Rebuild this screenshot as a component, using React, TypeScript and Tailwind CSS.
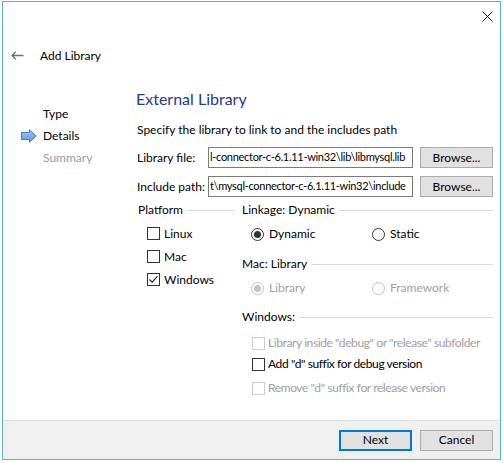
import { ReactNode } from "react";

const font = { fontFamily: 'Lato, "Noto Sans", sans-serif' };

function Check({ checked, disabled }: { checked?: boolean; disabled?: boolean }) {
  return (
    <div
      className={`w-[13px] h-[13px] border bg-white flex items-center justify-center shrink-0 ${
        disabled ? "border-[#cccccc]" : "border-[#333333]"
      }`}
    >
      {checked && (
        <svg width="11" height="11" viewBox="0 0 11 11">
          <path d="M1.5 5.5 L4.2 8.2 L9.5 2.2" fill="none" stroke="#222" strokeWidth="1.1" />
        </svg>
      )}
    </div>
  );
}

function Radio({ checked, disabled }: { checked?: boolean; disabled?: boolean }) {
  return (
    <div
      className={`w-[13px] h-[13px] rounded-full border bg-white flex items-center justify-center shrink-0 ${
        disabled ? "border-[#c4c4c4]" : "border-[#333333]"
      }`}
    >
      {checked && (
        <div className={`w-[7px] h-[7px] rounded-full ${disabled ? "bg-[#c4c4c4]" : "bg-[#333333]"}`} />
      )}
    </div>
  );
}

function GroupHeader({ children }: { children: ReactNode }) {
  return (
    <div className="h-[16px] flex items-center">
      <span className="whitespace-nowrap">{children}</span>
      <div className="flex-1 h-px bg-[#dcdcdc] ml-[4px]" />
    </div>
  );
}

function PathRow({ label, value }: { label: string; value: string }) {
  return (
    <div className="flex items-center h-[21px]">
      <span className="w-[71px] shrink-0 whitespace-nowrap">{label}</span>
      <div className="w-[205px] h-[21px] border border-[#7a7a7a] bg-white overflow-hidden whitespace-nowrap flex items-center pl-[1px] text-[11px] tracking-[-0.3px]">
        {value}
      </div>
      <button className="ml-[7px] w-[73px] h-[21px] border border-[#adadad] bg-[#e1e1e1] whitespace-nowrap">
        Browse...
      </button>
    </div>
  );
}

function NavArrow() {
  return (
    <svg width="16" height="14" viewBox="0 0 16 14" className="shrink-0">
      <defs>
        <linearGradient id="na" x1="0" y1="0" x2="0" y2="1">
          <stop offset="0" stopColor="#a9c8f2" />
          <stop offset="1" stopColor="#5d93e0" />
        </linearGradient>
      </defs>
      <path d="M0.5 3.5 H8.5 V0.8 L15.2 7 L8.5 13.2 V10.5 H0.5 Z" fill="url(#na)" stroke="#3f7ccf" strokeWidth="1" />
    </svg>
  );
}

export default function App() {
  return (
    <div className="w-[504px] h-[463px] bg-white text-[12px] text-black overflow-hidden" style={font}>
      <div className="ml-[2px] mt-[1px] w-[499px] h-[459px] border border-[#5ab4c0] flex flex-col">
        <div className="flex-1 flex flex-col bg-white">
          <div className="h-[33px] flex justify-end pr-[7px] pt-[9px]">
            <svg width="11" height="11" viewBox="0 0 11 11">
              <path d="M0.5 0.5 L10.5 10.5 M10.5 0.5 L0.5 10.5" stroke="#111" strokeWidth="1" />
            </svg>
          </div>
          <div className="h-[41px] flex items-center">
            <svg width="13" height="9" viewBox="0 0 13 9" className="ml-[8px]">
              <path d="M1 4.5 H12.5 M4.8 0.7 L1 4.5 L4.8 8.3" fill="none" stroke="#707070" strokeWidth="1.3" />
            </svg>
            <span className="ml-[16px] text-[12px]">Add Library</span>
          </div>

          <div className="flex">
            <div className="w-[133px] shrink-0 pt-[27px]">
              <div className="h-[22px] flex items-center pl-[40px]">Type</div>
              <div className="h-[22px] flex items-center pl-[18px]">
                <NavArrow />
                <span className="ml-[6px]">Details</span>
              </div>
              <div className="h-[22px] flex items-center pl-[40px] text-[#9a9a9a]">Summary</div>
            </div>

            <div className="flex-1 min-w-0 pr-[7px] whitespace-nowrap">
              <div className="mt-[12px] h-[22px] flex items-center text-[16px] text-[#1c3b91]">External Library</div>
              <div className="ml-[1px] mt-[10px] h-[20px] flex items-center">
                Specify the library to link to and the includes path
              </div>
              <div className="ml-[1px] mt-[7px]">
                <PathRow label="Library file:" value="l-connector-c-6.1.11-win32\lib\libmysql.lib" />
              </div>
              <div className="ml-[1px] mt-[8px]">
                <PathRow label="Include path:" value="t\mysql-connector-c-6.1.11-win32\include" />
              </div>

              <div className="ml-[2px] mt-[5px] flex">
                <div className="w-[97px] shrink-0">
                  <GroupHeader>Platform</GroupHeader>
                  <div className="mt-[4px] pl-[9px]">
                    {[
                      ["Linux", false],
                      ["Mac", false],
                      ["Windows", true],
                    ].map(([name, on]) => (
                      <div key={name as string} className="h-[23px] flex items-center">
                        <Check checked={on as boolean} />
                        <span className="ml-[4px]">{name}</span>
                      </div>
                    ))}
                  </div>
                </div>

                <div className="flex-1 min-w-0 ml-[7px]">
                  <GroupHeader>Linkage: Dynamic</GroupHeader>
                  <div className="mt-[4px] h-[24px] flex items-center pl-[9px]">
                    <div className="w-[121px] flex items-center">
                      <Radio checked />
                      <span className="ml-[5px]">Dynamic</span>
                    </div>
                    <div className="flex items-center">
                      <Radio />
                      <span className="ml-[5px]">Static</span>
                    </div>
                  </div>

                  <div className="mt-[10px]">
                    <GroupHeader>Mac: Library</GroupHeader>
                  </div>
                  <div className="mt-[4px] h-[24px] flex items-center pl-[9px] text-[#a0a0a0]">
                    <div className="w-[121px] flex items-center">
                      <Radio checked disabled />
                      <span className="ml-[5px]">Library</span>
                    </div>
                    <div className="flex items-center">
                      <Radio disabled />
                      <span className="ml-[5px]">Framework</span>
                    </div>
                  </div>

                  <div className="mt-[9px]">
                    <GroupHeader>Windows:</GroupHeader>
                  </div>
                  <div className="pl-[10px] tracking-[-0.4px]">
                    <div className="mt-[8px] h-[20px] flex items-center text-[#a0a0a0]">
                      <Check disabled />
                      <span className="ml-[3px]">Library inside "debug" or "release" subfolder</span>
                    </div>
                    <div className="mt-[1px] h-[20px] flex items-center">
                      <Check />
                      <span className="ml-[3px]">Add "d" suffix for debug version</span>
                    </div>
                    <div className="mt-[4px] h-[20px] flex items-center text-[#a0a0a0]">
                      <Check disabled />
                      <span className="ml-[3px]">Remove "d" suffix for release version</span>
                    </div>
                  </div>
                </div>
              </div>
            </div>
          </div>
        </div>

        <div className="h-[39px] shrink-0 bg-[#f0f0f0] border-t border-[#dfdfdf] flex items-center justify-end pr-[7px] gap-[8px]">
          <button className="w-[73px] h-[21px] border-2 border-[#0078d7] bg-[#e1e1e1] leading-none">Next</button>
          <button className="w-[73px] h-[21px] border border-[#adadad] bg-[#e1e1e1] leading-none">Cancel</button>
        </div>
      </div>
    </div>
  );
}
